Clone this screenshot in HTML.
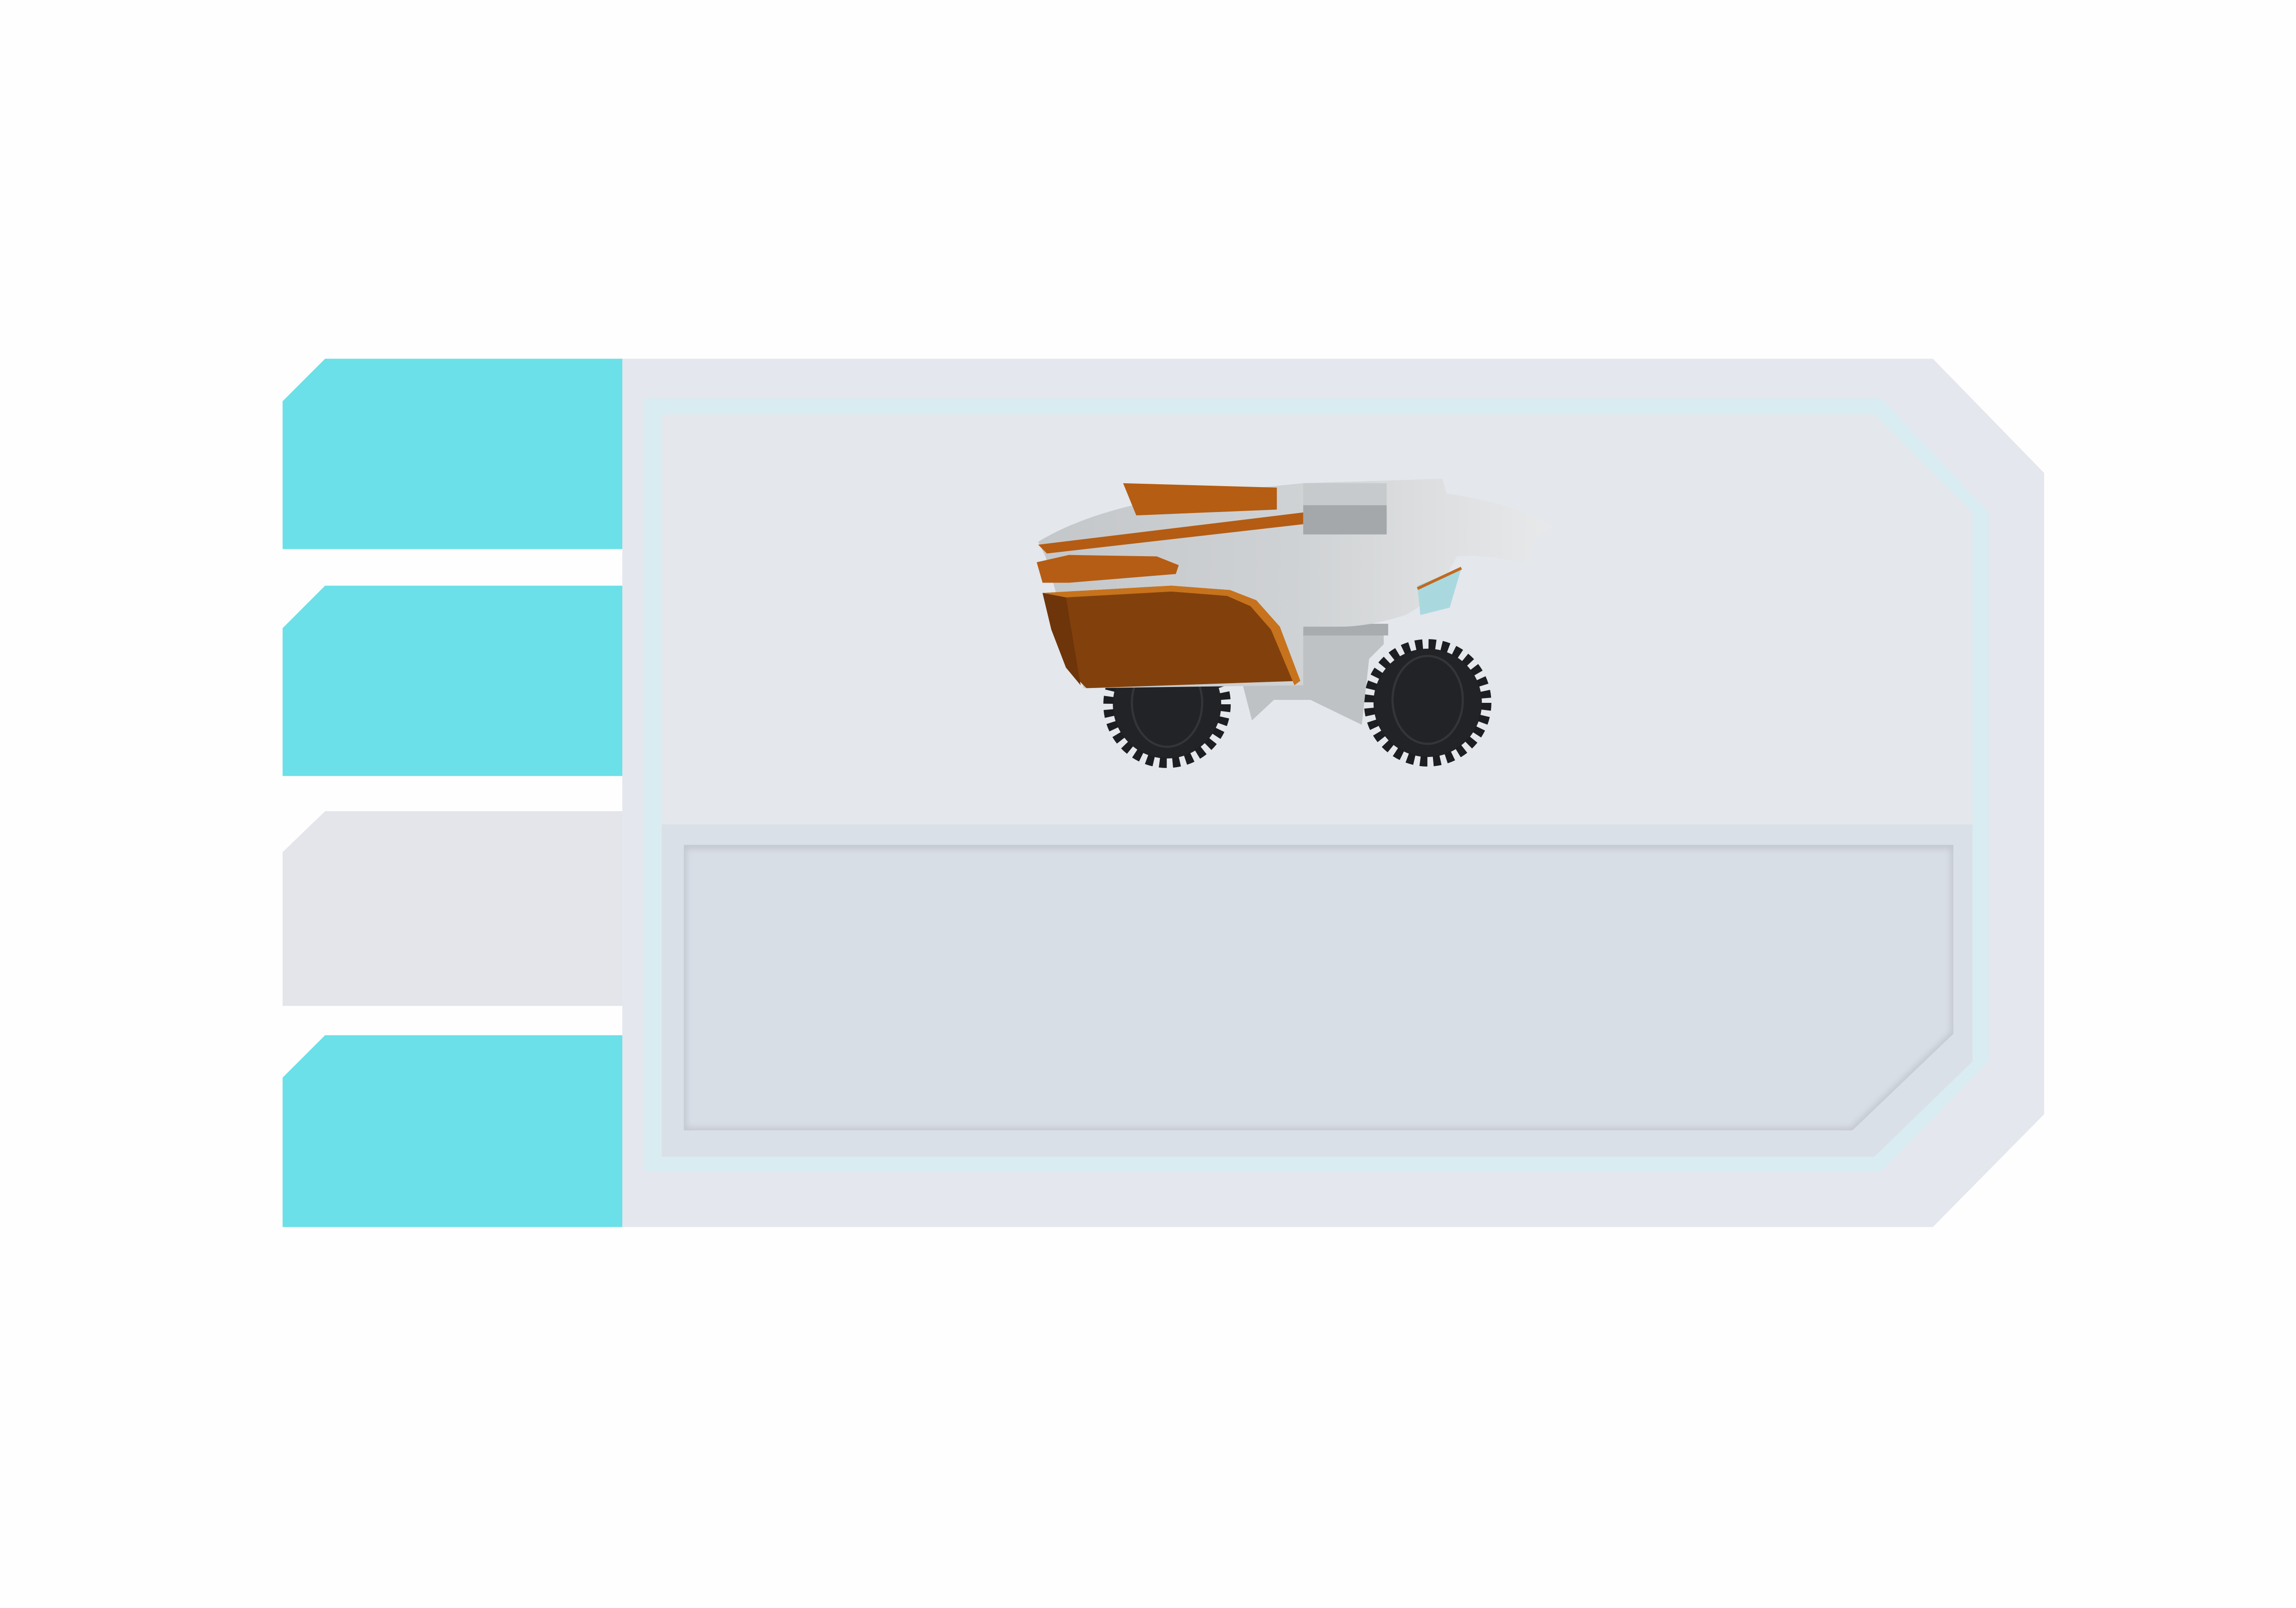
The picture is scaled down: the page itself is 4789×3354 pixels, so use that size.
<!DOCTYPE html>
<html><head><meta charset="utf-8"><style>
html,body{margin:0;padding:0;background:#fff;width:4789px;height:3354px;overflow:hidden}
svg{display:block}
</style></head><body>
<svg width="4789" height="3354" viewBox="0 0 1568 1098.2" preserveAspectRatio="none" xmlns="http://www.w3.org/2000/svg">
<defs>
<filter id="blur" x="-5%" y="-5%" width="110%" height="110%"><feGaussianBlur stdDeviation="2"/></filter>
<linearGradient id="wh" x1="0" x2="1"><stop offset="0" stop-color="#c4c7ca"/><stop offset="0.5" stop-color="#cfd2d4"/><stop offset="1" stop-color="#e8e9ea"/></linearGradient>
</defs>
<rect width="1568" height="1098.2" fill="#fefefe"/>
<!-- tabs -->
<polygon points="222,245 425,245 425,375 193,375 193,274" fill="#6be0e8"/>
<polygon points="222,400 425,400 425,530 193,530 193,429" fill="#6be0e8"/>
<polygon points="222,554 425,554 425,687 193,687 193,582" fill="#e4e5ea"/>
<polygon points="222,707 425,707 425,838 193,838 193,736" fill="#6be0e8"/>
<!-- main panel -->
<polygon points="425,245 1320,245 1396,323 1396,761 1320,838 425,838" fill="#e4e7ed"/>
<!-- cyan border -->
<polygon points="440,272 1285,272 1358,350 1358,725 1285,800 440,800" fill="#d8ecf2"/>
<polygon points="452,283 1280,283 1347,350 1347,725 1280,790 452,790" fill="#e4e7ec"/>
<!-- lower band -->
<polygon points="452,563 1347,563 1347,725 1280,790 452,790" fill="#d9e0e7"/>
<polygon points="467,577 1334,577 1334,706 1265,772 467,772" fill="#c4c9d1"/>
<polygon points="469,580 1332,580 1332,705 1264,770 469,770" fill="#d8dee6" filter="url(#blur)"/>
<!-- car -->
<g>
<!-- wheels -->
<circle cx="797" cy="481" r="37" fill="#222326"/>
<circle cx="797" cy="481" r="40" fill="none" stroke="#1d1e21" stroke-width="7" stroke-dasharray="5 4"/>
<circle cx="975" cy="480" r="37" fill="#222326"/>
<circle cx="975" cy="480" r="40" fill="none" stroke="#1d1e21" stroke-width="7" stroke-dasharray="5 4"/>
<ellipse cx="975" cy="478" rx="24" ry="30" fill="none" stroke="#34353a" stroke-width="1.5"/>
<ellipse cx="797" cy="480" rx="24" ry="30" fill="none" stroke="#34353a" stroke-width="1.5"/>
<!-- lower stem -->
<polygon points="848,465 890,430 945,430 945,440 935,450 930,495 895,478 870,478 855,492" fill="#bfc2c5"/>
<rect x="890" y="426" width="58" height="8" fill="#a9acaf"/>
<!-- main gray body -->
<path d="M709,370 Q745,348 810,338 L890,330 L985,327 L988,337 Q1040,345 1060,360 L1050,366 L1043,385 Q1010,378 995,380 L985,398 Q975,412 960,420 Q935,428 915,428 L890,428 L890,468 L740,470 L714,380 Z" fill="url(#wh)"/>
<rect x="890" y="345" width="57" height="20" fill="#a5a8ab"/>
<rect x="890" y="330" width="57" height="15" fill="#c7cacc"/>
<path d="M968,400 L998,388 L990,415 L970,420 Z" fill="#a9d9df"/>
<line x1="968" y1="402" x2="998" y2="388" stroke="#c06a22" stroke-width="2"/>
<!-- orange parts -->
<polygon points="767,330 872,333 872,348 776,352" fill="#b55d12"/>
<polygon points="709,372 890,350 890,358 715,378" fill="#b45c13"/>
<polygon points="708,384 730,379 790,380 805,386 803,392 730,398 712,398" fill="#b55d14"/>
<polygon points="712,405 800,400 840,403 858,410 874,428 888,465 742,470 728,456 718,430" fill="#82410c"/>
<polygon points="712,405 800,400 840,403 858,410 874,428 888,465 884,468 868,430 854,414 838,407 800,404 728,408" fill="#c7731d"/>
<polygon points="712,405 728,408 738,468 728,456 718,430" fill="#6d3509"/>
</g>
</svg>
</body></html>
